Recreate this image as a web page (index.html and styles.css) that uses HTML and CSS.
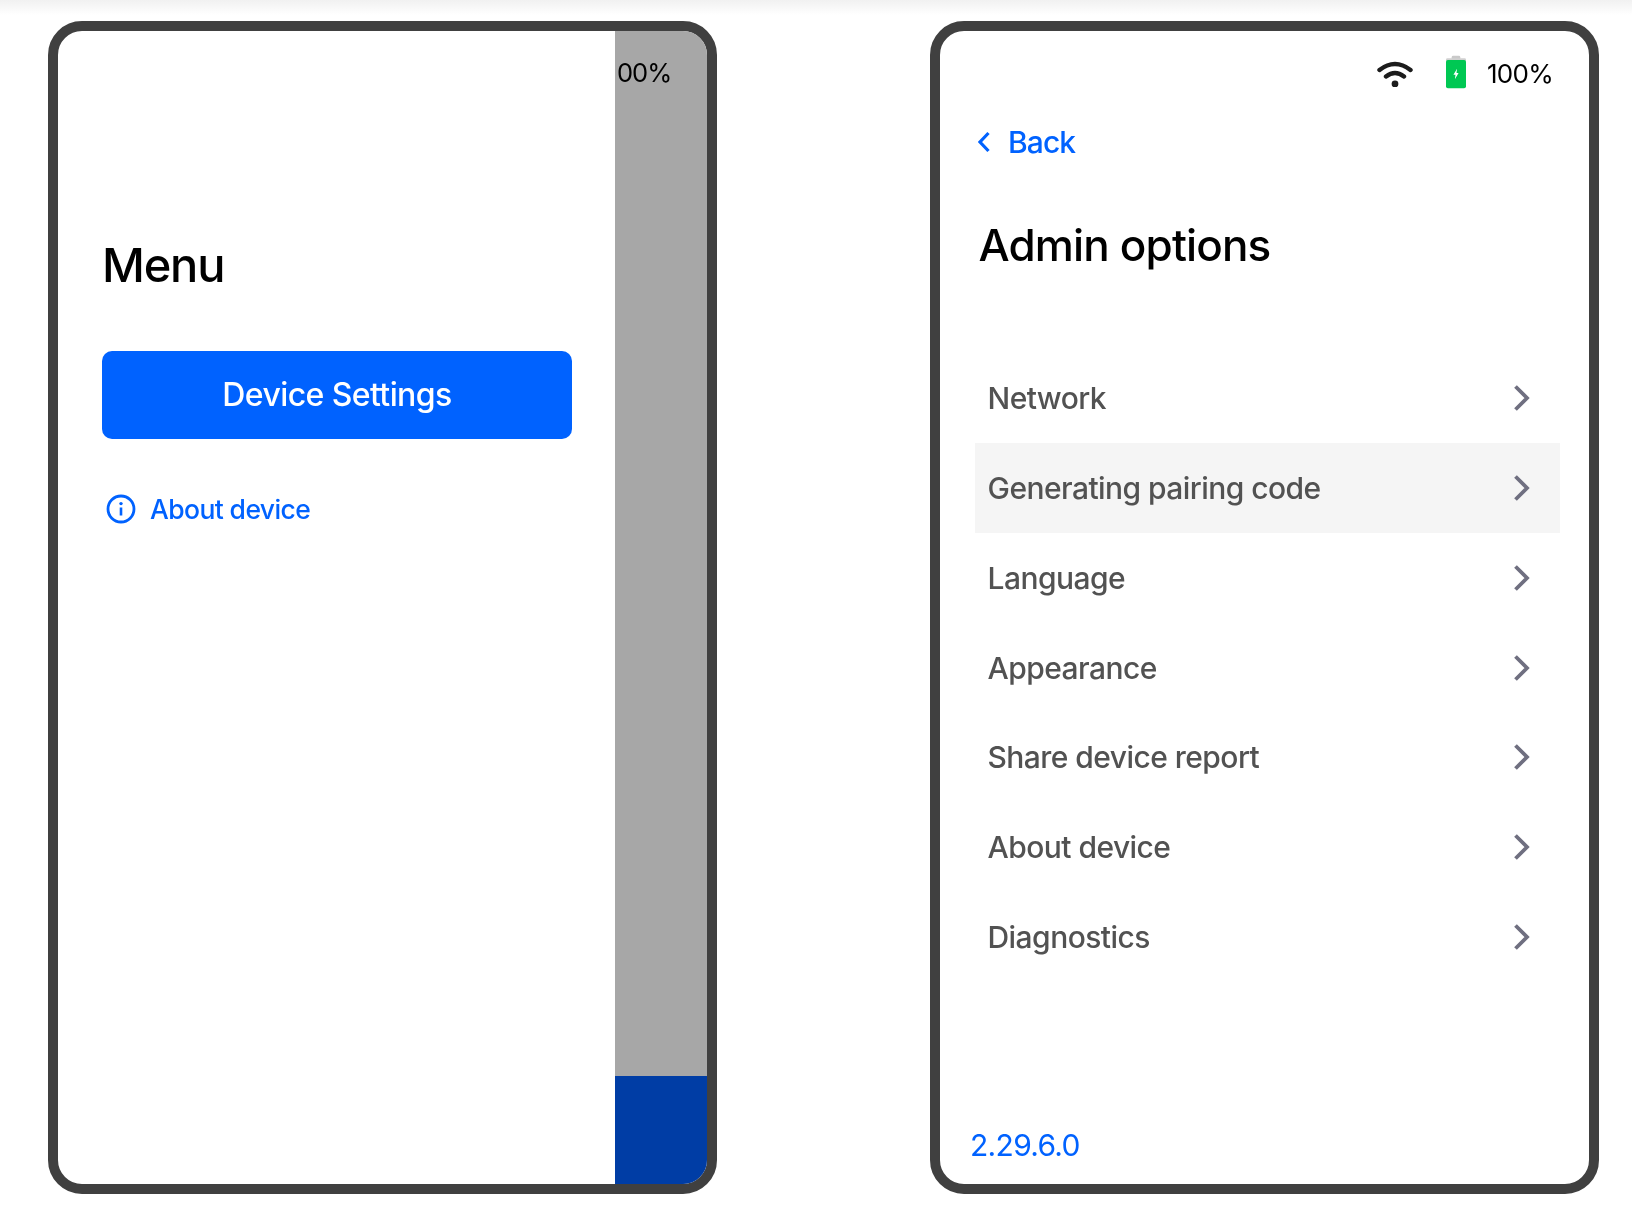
FILE: index.html
```html
<!DOCTYPE html>
<html lang="en">
<head>
<meta charset="utf-8">
<title>Device menu and admin options</title>
<link rel="stylesheet" href="styles.css">
</head>
<body>
<main class="stage">
  <section class="phone">
    <div class="drawer">
      <h1 class="menu-title">Menu</h1>
      <button class="primary-btn" type="button">Device Settings</button>
      <a class="about-link" href="#">
        <svg class="info-icon" viewBox="0 0 30 30" aria-hidden="true">
          <circle cx="15" cy="15" r="13" fill="none" stroke="currentColor" stroke-width="2.8"/>
          <circle cx="15" cy="9.6" r="1.7" fill="currentColor"/>
          <path d="M15 13.5V21.5" fill="none" stroke="currentColor" stroke-width="2.6"/>
        </svg>
        <span>About device</span>
      </a>
    </div>
    <div class="scrim">
      <span class="scrim-status">00%</span>
      <div class="scrim-footer"></div>
    </div>
  </section>

  <section class="phone phone-admin">
    <div class="status">
      <svg class="wifi" viewBox="0 0 36 26" aria-hidden="true">
        <path d="M2.5 9Q18 -3 33.5 9M9 15.5Q18 8.5 27 15.5" fill="none" stroke="#1c1c1c" stroke-width="4.4" stroke-linecap="round"/>
        <circle cx="18" cy="23" r="3.4" fill="#1c1c1c"/>
      </svg>
      <svg class="battery" viewBox="0 0 21 34" aria-hidden="true">
        <rect x="6" y="0" width="9" height="5" rx="1.5" fill="#c9c9c9"/>
        <rect x="0" y="2.5" width="21" height="5" rx="1.5" fill="#cfcfcf"/>
        <rect x="0" y="4.5" width="21" height="29.5" rx="2" fill="#00c853"/>
        <path d="M11.6 13.5 7.8 20H10L9.3 24.5 13.2 18H11z" fill="#fff"/>
      </svg>
      <span class="percent">100%</span>
    </div>
    <a class="back" href="#">
      <svg class="back-icon" viewBox="0 0 14 24" aria-hidden="true">
        <path d="M11.5 3 3 12l8.5 9" fill="none" stroke="currentColor" stroke-width="3.2"/>
      </svg>
      <span>Back</span>
    </a>
    <h1 class="admin-title">Admin options</h1>
    <ul class="options">
      <li class="option"><span>Network</span><svg class="chev" viewBox="0 0 17 28" aria-hidden="true"><path d="M2.5 2.5 14 14 2.5 25.5" /></svg></li>
      <li class="option option-active"><span>Generating pairing code</span><svg class="chev" viewBox="0 0 17 28" aria-hidden="true"><path d="M2.5 2.5 14 14 2.5 25.5" /></svg></li>
      <li class="option"><span>Language</span><svg class="chev" viewBox="0 0 17 28" aria-hidden="true"><path d="M2.5 2.5 14 14 2.5 25.5" /></svg></li>
      <li class="option"><span>Appearance</span><svg class="chev" viewBox="0 0 17 28" aria-hidden="true"><path d="M2.5 2.5 14 14 2.5 25.5" /></svg></li>
      <li class="option"><span>Share device report</span><svg class="chev" viewBox="0 0 17 28" aria-hidden="true"><path d="M2.5 2.5 14 14 2.5 25.5" /></svg></li>
      <li class="option"><span>About device</span><svg class="chev" viewBox="0 0 17 28" aria-hidden="true"><path d="M2.5 2.5 14 14 2.5 25.5" /></svg></li>
      <li class="option"><span>Diagnostics</span><svg class="chev" viewBox="0 0 17 28" aria-hidden="true"><path d="M2.5 2.5 14 14 2.5 25.5" /></svg></li>
    </ul>
    <div class="version">2.29.6.0</div>
  </section>
</main>
</body>
</html>
```

FILE: styles.css
```css
* { box-sizing: border-box; }
html, body { margin: 0; height: 100%; }
body {
  background: #fff linear-gradient(#f1f1f1, #fff 15px) no-repeat;
  font-family: Inter, "Noto Sans", sans-serif;
  overflow: hidden;
}
.stage {
  display: flex;
  gap: 213px;
  padding: 21px 0 0 48px;
  filter: blur(0.5px);
}
.phone {
  display: flex;
  width: 669px;
  height: 1173px;
  border: 10.5px solid #404040;
  border-radius: 34px;
  background: #fff;
  overflow: hidden;
}
.drawer {
  width: 557px;
  flex: none;
  padding: 0 44px;
  display: flex;
  flex-direction: column;
}
.menu-title {
  margin: 205.5px 0 0;
  font-size: 47px;
  line-height: 56px;
  font-weight: 450;
  letter-spacing: -1.2px;
  color: #000;
}
.primary-btn {
  margin-top: 58.5px;
  width: 470px;
  height: 88px;
  padding: 0 0 2px;
  border: 0;
  border-radius: 10px;
  background: #0062ff;
  color: #fff;
  font: 450 32px Inter, sans-serif;
  letter-spacing: -0.6px;
}
.about-link {
  margin-top: 52.5px;
  display: flex;
  align-items: center;
  gap: 14px;
  padding-left: 4px;
  color: #0062ff;
  font-size: 26.5px;
  font-weight: 450;
  line-height: 35px;
  letter-spacing: -0.6px;
  text-decoration: none;
}
.info-icon { width: 30px; height: 30px; flex: none; }
.scrim {
  flex: 1;
  display: flex;
  flex-direction: column;
  background: #a7a7a7;
  overflow: hidden;
}
.scrim-status {
  margin-top: 21px;
  padding-left: 2px;
  line-height: 42px;
  font-size: 25.5px;
  letter-spacing: -1px;
  color: #000;
}
.scrim-footer {
  margin-top: auto;
  height: 108px;
  background: #003da5;
}
.phone-admin { flex-direction: column; }
.status {
  margin-top: 22px;
  height: 42px;
  padding-right: 36px;
  display: flex;
  justify-content: flex-end;
  align-items: center;
  color: #000;
}
.wifi { width: 36px; height: 26px; margin-right: 33px; }
.battery { width: 20px; height: 34px; margin: -5px 21px 0 0; }
.percent { font-size: 26px; letter-spacing: -0.7px; padding-bottom: 2px; }
.back {
  margin: 29px 0 0 37px;
  height: 36px;
  display: flex;
  align-items: center;
  gap: 17px;
  color: #0062ff;
  font-size: 30px;
  font-weight: 500;
  letter-spacing: -0.9px;
  text-decoration: none;
}
.back-icon { width: 14px; height: 24px; }
.admin-title {
  margin: 57px 0 0 38.5px;
  font-size: 44px;
  line-height: 56px;
  font-weight: 450;
  letter-spacing: -0.85px;
  color: #000;
}
.options {
  list-style: none;
  margin: 80.3px 29px 0 34.5px;
  padding: 0;
}
.option {
  height: 89.8px;
  padding: 0 30px 0 13px;
  display: flex;
  align-items: center;
  justify-content: space-between;
  font-size: 30px;
  font-weight: 450;
  letter-spacing: -0.55px;
  color: #525252;
}
.option-active { background: #f5f5f5; }
.chev {
  width: 17px;
  height: 28px;
  fill: none;
  stroke: #6f6f80;
  stroke-width: 3.8;
}
.version {
  margin: auto 0 21px 30px;
  line-height: 36px;
  font-size: 30px;
  letter-spacing: -0.7px;
  color: #0062ff;
}
```
